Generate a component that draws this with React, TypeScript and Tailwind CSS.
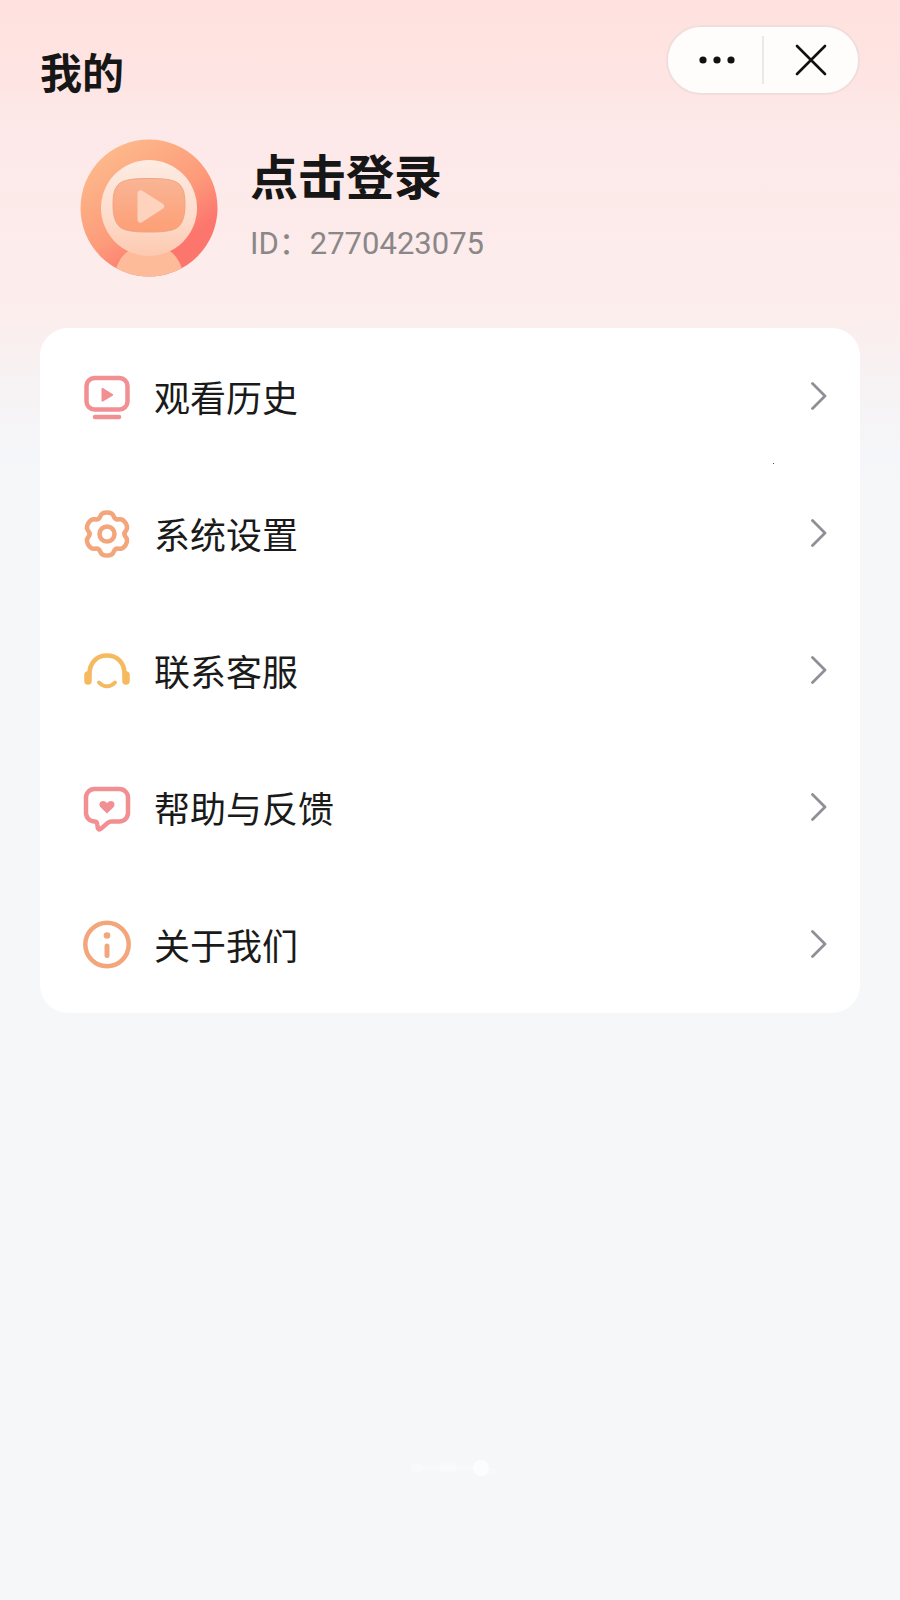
import type { ReactNode } from "react"

interface MenuItem {
  label: string
  icon: ReactNode
}

const iconClass = "size-[54px] shrink-0"

function HistoryIcon() {
  return (
    <svg viewBox="0 0 54 54" fill="none" className={iconClass} aria-hidden="true">
      <rect x="6.5" y="8" width="41" height="31.5" rx="8" stroke="#f28f93" strokeWidth="4.5" />
      <path d="M21.500 19v11.500a1 1 0 0 0 1.500.9l9.600-5.700a1 1 0 0 0 0-1.800L23 18.100a1 1 0 0 0-1.500.9z" fill="#f28f93" />
      <path d="M15 47h24" stroke="#f28f93" strokeWidth="4.5" strokeLinecap="round" />
    </svg>
  )
}

function SettingsIcon() {
  return (
    <svg viewBox="0 0 54 54" fill="none" className={iconClass} aria-hidden="true">
      <path
        d="M27 5.400Q32.400 5.400 33.700 9.300Q35 13.100 39 12.300Q43 11.500 45.700 16.200Q48.400 20.900 45.700 24Q43 27 45.700 30Q48.400 33.100 45.700 37.800Q43 42.500 39 41.700Q35 40.900 33.700 44.700Q32.400 48.600 27 48.600Q21.600 48.600 20.300 44.700Q19 40.900 15 41.700Q11 42.500 8.300 37.800Q5.600 33.100 8.300 30Q11 27 8.300 24Q5.600 20.900 8.300 16.200Q11 11.500 15 12.300Q19 13.100 20.300 9.300Q21.600 5.400 27 5.400z"
        stroke="#f3a67c"
        strokeWidth="4.5"
        strokeLinejoin="round"
      />
      <circle cx="27" cy="27" r="7.500" stroke="#f3a67c" strokeWidth="4.500" />
    </svg>
  )
}

function ServiceIcon() {
  return (
    <svg viewBox="0 0 54 54" fill="none" stroke="#f5b95f" strokeLinecap="round" className={iconClass} aria-hidden="true">
      <path d="M9.500 30C9.500 19 16.500 11.500 27 11.500S44.500 19 44.500 30" strokeWidth="4.500" />
      <path d="M8 31v6M46 31v6" strokeWidth="7.500" />
      <path d="M19 38.500c4.500 5 11.500 5 16 0" strokeWidth="4" />
    </svg>
  )
}

function FeedbackIcon() {
  return (
    <svg viewBox="0 0 54 54" fill="none" className={iconClass} aria-hidden="true">
      <path
        d="M14.500 8h25a8.500 8.500 0 0 1 8.500 8.500v15.500a8.500 8.500 0 0 1-8.500 8.500H31.500c-1.500 0-2.700.5-3.800 1.400l-6.900 6c-1.300 1.100-2.800.6-3-1l-.4-3.200c-.2-2-1.200-3.200-2.900-3.200a8.500 8.500 0 0 1-8.500-8.500v-15.500A8.500 8.500 0 0 1 14.500 8z"
        stroke="#f28f93"
        strokeWidth="4.500"
        strokeLinejoin="round"
      />
      <path
        d="M27 32.500l-6-5.700c-3-3-1.200-6.800 1.900-6.800 1.700 0 3.100.8 4.100 2.200 1-1.400 2.400-2.200 4.100-2.200 3.100 0 4.900 3.800 1.900 6.800z"
        fill="#f28f93"
      />
    </svg>
  )
}

function AboutIcon() {
  return (
    <svg viewBox="0 0 54 54" fill="none" className={iconClass} aria-hidden="true">
      <circle cx="27" cy="26.500" r="21.700" stroke="#f3a67c" strokeWidth="4.500" />
      <circle cx="27" cy="17.500" r="3.300" fill="#f3a67c" />
      <path d="M27 28v9.500" stroke="#f3a67c" strokeWidth="5" strokeLinecap="round" />
    </svg>
  )
}

function Avatar() {
  return (
    <svg viewBox="0 0 138 138" className="size-[138px] shrink-0" aria-hidden="true">
      <defs>
        <linearGradient id="ring" x1="0.2" y1="0.05" x2="0.8" y2="0.9">
          <stop offset="0" stopColor="#fdba8b" />
          <stop offset="0.55" stopColor="#fd9a7a" />
          <stop offset="0.85" stopColor="#fc766e" />
        </linearGradient>
        <linearGradient id="helmet" x1="0" y1="0" x2="0" y2="1">
          <stop offset="0" stopColor="#fdebe2" />
          <stop offset="0.6" stopColor="#fddccb" />
          <stop offset="1" stopColor="#fdc9b0" />
        </linearGradient>
        <linearGradient id="visor" x1="0" y1="0" x2="0" y2="1">
          <stop offset="0" stopColor="#f9b595" />
          <stop offset="1" stopColor="#fd9f76" />
        </linearGradient>
        <clipPath id="disc">
          <circle cx="69" cy="69" r="68.500" />
        </clipPath>
      </defs>
      <circle cx="69" cy="69" r="68.500" fill="url(#ring)" />
      <path d="M34 138c3-18 13-32 35-32s32 14 35 32z" fill="#fdbb99" clipPath="url(#disc)" />
      <circle cx="69" cy="69" r="48" fill="url(#helmet)" />
      <path
        d="M69 39.500c13 0 20 .7 26 3 7 3 10 9 10 23 0 15-4 22.500-11.500 25C87 92.500 80 93 69 93s-18-.5-24.500-2.500C37 88 33 80.500 33 65.500c0-14 3-20 10-23 6-2.300 13-3 26-3z"
        fill="url(#visor)"
        stroke="#f3a380"
        strokeWidth="1"
      />
      <path d="M57.500 54.500v26c0 2.800 2.600 4 4.800 2.600l20.500-13.400c2-1.400 2-3.600 0-5L62.300 51.700c-2.200-1.400-4.800 0-4.800 2.800z" fill="#fdd3bd" />
    </svg>
  )
}

function Chevron() {
  return (
    <svg viewBox="0 0 18 30" fill="none" className="ml-auto h-[30px] w-[18px] shrink-0" aria-hidden="true">
      <path d="M2.500 1.500L15 14 2.500 26.500" stroke="#8f9097" strokeWidth="2.800" strokeLinecap="round" strokeLinejoin="round" />
    </svg>
  )
}

const menuItems: MenuItem[] = [
  { label: "观看历史", icon: <HistoryIcon /> },
  { label: "系统设置", icon: <SettingsIcon /> },
  { label: "联系客服", icon: <ServiceIcon /> },
  { label: "帮助与反馈", icon: <FeedbackIcon /> },
  { label: "关于我们", icon: <AboutIcon /> },
]

export default function App() {
  return (
    <main className="flex min-h-screen flex-col bg-[#f5f7f9] bg-[linear-gradient(180deg,#ffe2df_0px,#fee4e3_80px,#fde8e8_110px,#fcedec_300px,#fbefee_330px,#f7f1f2_370px,#f5f6f9_450px,#f5f7f9_490px)] px-10 pt-[25px] font-[Roboto,'Noto_Sans_CJK_SC',sans-serif] text-[#1a1a1a]">
      <header className="flex items-start justify-between">
        <h1 className="mt-5 text-[42px] leading-[60px] font-bold text-[#161616]">我的</h1>
        <div className="flex h-[70px] w-[194px] items-center rounded-full border-2 border-[#f1dedc] bg-[#fefdfb]">
          <button type="button" aria-label="更多" className="flex h-full flex-1 items-center justify-center">
            <svg viewBox="0 0 38 8" className="ml-1 h-2 w-[38px]" aria-hidden="true">
              <circle cx="5" cy="4" r="3.600" fill="#111" />
              <circle cx="19" cy="4" r="3.600" fill="#111" />
              <circle cx="33" cy="4" r="3.600" fill="#111" />
            </svg>
          </button>
          <span className="h-12 w-[2px] bg-[#ebe8e7]" />
          <button type="button" aria-label="关闭" className="flex h-full flex-1 items-center justify-center">
            <svg viewBox="0 0 32 32" className="size-8" aria-hidden="true">
              <path d="M2 2l28 28M30 2L2 30" stroke="#111" strokeWidth="2.600" strokeLinecap="round" />
            </svg>
          </button>
        </div>
      </header>

      <button type="button" className="mt-[34px] ml-10 flex items-start gap-8 self-start text-left">
        <Avatar />
        <span className="flex flex-col gap-2 pt-2">
          <span className="text-[48px] leading-[64px] font-bold text-[#161616]">点击登录</span>
          <span className="text-[31px] leading-[50px] text-[#8b8788]">ID：2770423075</span>
        </span>
      </button>

      <nav className="relative mt-[51px] rounded-[28px] bg-white">
        <ul>
          {menuItems.map((item) => (
            <li key={item.label}>
              <button type="button" className="flex h-[137px] w-full items-center gap-5 pr-8 pl-10 text-left">
                {item.icon}
                <span className="pt-1.5 text-[36px] leading-[54px]">{item.label}</span>
                <Chevron />
              </button>
            </li>
          ))}
        </ul>
        <span className="absolute top-[135px] right-[86px] size-px bg-[#2d5560]" />
      </nav>

      {/* faint page marks above the bottom edge */}
      <svg viewBox="0 0 90 24" className="mt-auto mb-[120px] h-6 w-[90px] self-center" aria-hidden="true">
        <g fill="#fff">
          <ellipse cx="12" cy="12" rx="7" ry="5" opacity="0.250" />
          <path d="M12 9h58v6H12z" opacity="0.200" />
          <ellipse cx="43" cy="11" rx="9" ry="6" opacity="0.250" />
          <circle cx="76" cy="12" r="8" opacity="0.700" />
          <path d="M80 12h10v7H80z" opacity="0.250" />
        </g>
      </svg>
    </main>
  )
}
